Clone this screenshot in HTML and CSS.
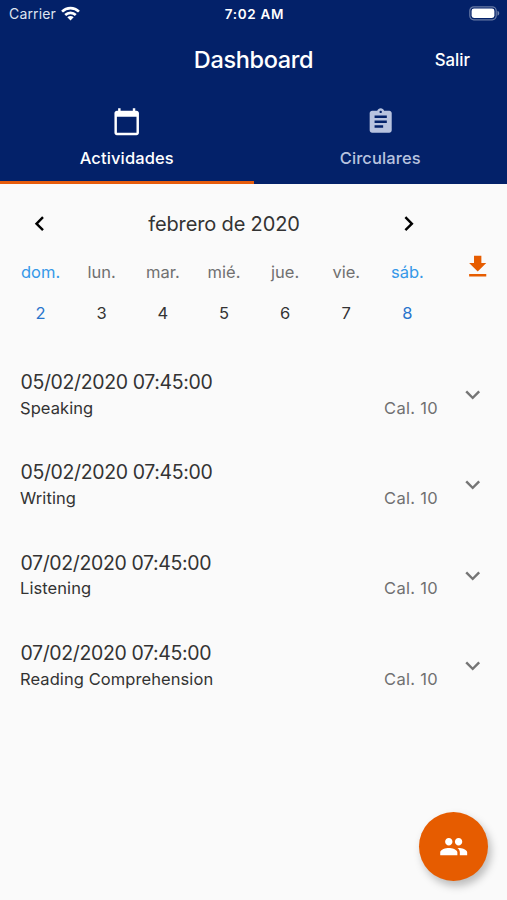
FILE: index.html
```
<!DOCTYPE html>
<html lang="es">
<head>
<meta charset="utf-8">
<title>Dashboard</title>
<link rel="stylesheet" href="styles.css">
</head>
<body>
<header class="header">
  <div class="status">
    <div class="carrier"><span>Carrier</span>
      <svg class="wifi" viewBox="0 0 18 14"><path fill="none" stroke="#fff" stroke-width="2.5" d="M1 5.2a11.4 11.4 0 0 1 16 0M4 8.4a7.2 7.2 0 0 1 10 0"/><path fill="#fff" d="M9 13.6l-3-3a4.3 4.3 0 0 1 6 0z"/></svg>
    </div>
    <span class="clock">7:02 AM</span>
    <svg class="battery" viewBox="0 0 31 15"><rect x=".8" y=".8" width="26.4" height="13" rx="4" fill="none" stroke="#fff" stroke-opacity=".4" stroke-width="1.2"/><rect x="2.6" y="2.6" width="22.8" height="9.4" rx="2.4" fill="#fff"/><path fill="#fff" fill-opacity=".45" d="M28.5 4.8c2.3 1 2.3 4 0 5z"/></svg>
  </div>
  <div class="appbar"><h1>Dashboard</h1><span class="logout">Salir</span></div>
  <nav class="tabs">
    <div class="tab active">
      <svg class="icon" viewBox="0 0 24 24"><path d="M20 3h-1V1h-2v2H7V1H5v2H4c-1.1 0-2 .9-2 2v16c0 1.1.9 2 2 2h16c1.1 0 2-.9 2-2V5c0-1.1-.9-2-2-2zm0 18H4V8h16v13z"/></svg>
      <span>Actividades</span>
    </div>
    <div class="tab">
      <svg class="icon" viewBox="0 0 24 24"><path d="M19 3h-4.18C14.4 1.84 13.3 1 12 1c-1.3 0-2.4.84-2.82 2H5c-1.1 0-2 .9-2 2v14c0 1.1.9 2 2 2h14c1.1 0 2-.9 2-2V5c0-1.1-.9-2-2-2zm-7 0c.55 0 1 .45 1 1s-.45 1-1 1-1-.45-1-1 .45-1 1-1zm2 14H7v-2h7v2zm3-4H7v-2h10v2zm0-4H7V7h10v2z"/></svg>
      <span>Circulares</span>
    </div>
  </nav>
</header>
<main>
  <section class="calendar">
    <div class="week">
      <div class="month">
        <svg class="icon" viewBox="0 0 24 24"><path d="M15.41 7.41L14 6l-6 6 6 6 1.41-1.41L10.83 12z"/></svg>
        <h2>febrero de 2020</h2>
        <svg class="icon" viewBox="0 0 24 24"><path d="M10 6L8.59 7.41 13.17 12l-4.58 4.59L10 18l6-6z"/></svg>
      </div>
      <div class="days names"><span class="weekend">dom.</span><span>lun.</span><span>mar.</span><span>mié.</span><span>jue.</span><span>vie.</span><span class="weekend">sáb.</span></div>
      <div class="days numbers"><span class="weekend">2</span><span>3</span><span>4</span><span>5</span><span>6</span><span>7</span><span class="weekend">8</span></div>
    </div>
    <svg class="icon download" viewBox="0 0 24 24"><path d="M19 9h-4V3H9v6H5l7 7 7-7zM5 18v2h14v-2H5z"/></svg>
  </section>
  <section class="list">
    <article class="item"><div class="info"><div class="date">05/02/2020 07:45:00</div><div class="detail"><span>Speaking</span><span class="grade">Cal. 10</span></div></div><svg class="icon" viewBox="0 0 24 24"><path d="M16.59 8.59L12 13.17 7.41 8.59 6 10l6 6 6-6z"/></svg></article>
    <article class="item"><div class="info"><div class="date">05/02/2020 07:45:00</div><div class="detail"><span>Writing</span><span class="grade">Cal. 10</span></div></div><svg class="icon" viewBox="0 0 24 24"><path d="M16.59 8.59L12 13.17 7.41 8.59 6 10l6 6 6-6z"/></svg></article>
    <article class="item"><div class="info"><div class="date">07/02/2020 07:45:00</div><div class="detail"><span>Listening</span><span class="grade">Cal. 10</span></div></div><svg class="icon" viewBox="0 0 24 24"><path d="M16.59 8.59L12 13.17 7.41 8.59 6 10l6 6 6-6z"/></svg></article>
    <article class="item"><div class="info"><div class="date">07/02/2020 07:45:00</div><div class="detail"><span>Reading Comprehension</span><span class="grade">Cal. 10</span></div></div><svg class="icon" viewBox="0 0 24 24"><path d="M16.59 8.59L12 13.17 7.41 8.59 6 10l6 6 6-6z"/></svg></article>
  </section>
</main>
<div class="fab"><svg class="icon" viewBox="0 0 24 24"><path d="M16 11c1.66 0 2.99-1.34 2.99-3S17.66 5 16 5c-1.66 0-3 1.34-3 3s1.34 3 3 3zm-8 0c1.66 0 2.99-1.34 2.99-3S9.66 5 8 5C6.34 5 5 6.34 5 8s1.34 3 3 3zm0 2c-2.33 0-7 1.17-7 3.5V19h14v-2.5c0-2.33-4.67-3.5-7-3.5zm8 0c-.29 0-.62.02-.97.05 1.16.84 1.97 1.97 1.97 3.45V19h6v-2.5c0-2.33-4.67-3.5-7-3.5z"/></svg></div>
</body>
</html>
```
FILE: styles.css
```
* { box-sizing: border-box; }
body { margin: 0; height: 900px; overflow: hidden; background: #fafafa; color: #333; font-family: Inter, Roboto, sans-serif; }
h1, h2 { margin: 0; }
.icon { display: block; width: 29.4px; height: 29.4px; fill: currentColor; flex: none; }

.header { height: 184px; background: #032169; color: #fff; }
.status { display: grid; grid-template-columns: 1fr auto 1fr; align-items: center; height: 27px; padding: 0 7px 0 9px; font-size: 14px; }
.carrier { display: flex; align-items: center; gap: 5px; color: #dfe4f0; letter-spacing: .15px; }
.wifi { width: 19px; height: 15px; }
.clock { font-size: 13.5px; font-weight: 600; letter-spacing: .7px; }
.battery { width: 31px; height: 15px; justify-self: end; }
.appbar { display: grid; grid-template-columns: 1fr auto 1fr; align-items: center; height: 66px; padding-bottom: 1px; }
.appbar h1 { grid-column: 2; font-size: 23.5px; line-height: 28px; font-weight: 500; letter-spacing: -.35px; }
.logout { justify-self: end; padding-right: 37px; font-size: 16.8px; font-weight: 500; }
.tabs { display: flex; height: 91px; }
.tab { flex: 1; display: flex; flex-direction: column; align-items: center; padding-top: 14px; gap: 12px; border-bottom: 3px solid transparent; color: #b8c3df; font-size: 16.5px; line-height: 20px; font-weight: 500; letter-spacing: .12px; }
.tab.active { color: #fff; border-color: #e65c0c; }

.calendar { display: flex; height: 163px; }
.week { width: 448px; padding: 20px 10px 0; }
.month { display: flex; align-items: center; justify-content: space-between; height: 39px; padding: 0 15px; color: #000; }
.month h2 { font-size: 20px; font-weight: 400; letter-spacing: -.15px; color: #333; }
.days { display: grid; grid-template-columns: repeat(7, 1fr); text-align: center; font-size: 16.5px; line-height: 20px; color: #707070; }
.names { margin-top: 19px; }
.numbers { margin-top: 21px; color: #333; }
.names .weekend { color: #3598e8; }
.numbers .weekend { color: #2874cc; }
.download { margin: 68px 0 0 15px; color: #e65c00; }

.item { display: flex; justify-content: space-between; height: 90.4px; padding: 23px 20px 0; }
.info { width: 418px; }
.date { font-size: 19.5px; line-height: 25px; letter-spacing: -.37px; padding-left: .5px; }
.detail { display: flex; justify-content: space-between; margin-top: 2.5px; font-size: 16.5px; line-height: 20px; letter-spacing: .08px; }
.grade { color: #707070; letter-spacing: .3px; }
.item .icon { margin: 10px 0 0; color: #757575; }

.fab { position: absolute; left: 419px; top: 812px; display: grid; place-items: center; width: 69px; height: 69px; border-radius: 50%; background: #e65c00; color: #fff; box-shadow: 3px 5px 8px rgba(0,0,0,.26); }
```
